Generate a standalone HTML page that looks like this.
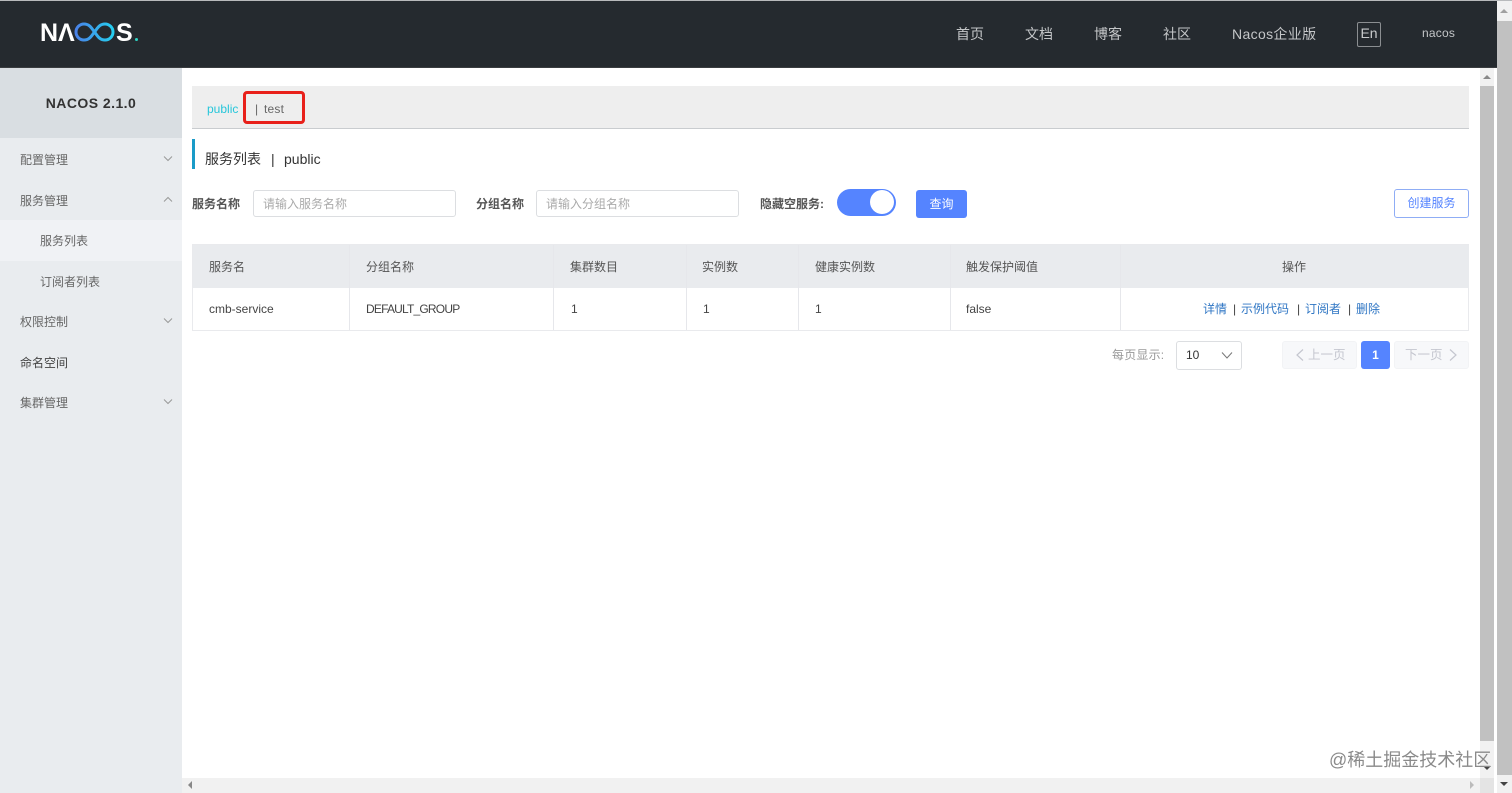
<!DOCTYPE html>
<html lang="zh">
<head>
<meta charset="utf-8">
<title>Nacos</title>
<style>
html,body{margin:0;padding:0;width:1512px;height:793px;overflow:hidden;background:#fff;}
body{font-family:"Liberation Sans","Noto Sans CJK SC",sans-serif;position:relative;color:#333;}
.a{position:absolute;white-space:nowrap;}
.nav{font-size:14px;line-height:20px;color:#c4c6c8;top:24px;}
.m{font-size:12px;line-height:16px;color:#666;left:20px;}
.th{font-size:12px;line-height:16px;color:#555;top:259px;}
.td{font-size:12px;line-height:16px;color:#444;top:301px;}
.b{font-size:12px;line-height:16px;color:#555;font-weight:700;top:196px;}
.inp{top:190px;height:25px;width:201px;border:1px solid #dcdee1;border-radius:3px;background:#fff;font-size:12px;line-height:26px;color:#aaa;text-indent:9px;}
.vl{width:1px;background:#e6e7eb;top:245px;height:85px;}
.lk{color:#2f76c4;font-size:12px;line-height:16px;top:301px;}
</style>
</head>
<body>
<!-- top bar -->
<div class="a" style="left:0;top:0;width:1512px;height:1px;background:#b8babc"></div>
<div class="a" style="left:0;top:1px;width:1497px;height:66px;background:#252a2f"></div>
<div class="a" style="left:0;top:67px;width:1497px;height:1px;background:#3a3d40"></div>
<!-- logo -->
<div class="a" style="left:40px;top:20px;font-size:25px;line-height:26px;font-weight:700;color:#fff">N</div>
<div class="a" style="left:58px;top:20px;font-size:25px;line-height:26px;font-weight:700;color:#fff">&#923;</div>
<svg class="a" style="left:72px;top:21px" width="48" height="22" viewBox="0 0 48 22">
<defs><linearGradient id="g" gradientUnits="userSpaceOnUse" x1="3" x2="42" y1="11" y2="11"><stop offset="0" stop-color="#4a80e8"/><stop offset="1" stop-color="#25d0f0"/></linearGradient></defs>
<path d="M12 3C18 3 20 8 22.500 11 25 14 27 19 33 19A8 8 0 0 0 33 3C27 3 25 8 22.500 11 20 14 18 19 12 19A8 8 0 0 1 12 3Z" fill="none" stroke="url(#g)" stroke-width="3"/>
</svg>
<div class="a" style="left:116px;top:20px;font-size:25px;line-height:26px;font-weight:700;color:#fff">S</div>
<div class="a" style="left:135px;top:38px;width:3px;height:3px;border-radius:2px;background:#2fd4c4"></div>
<!-- nav -->
<div class="a nav" style="left:956px">首页</div>
<div class="a nav" style="left:1025px">文档</div>
<div class="a nav" style="left:1094px">博客</div>
<div class="a nav" style="left:1163px">社区</div>
<div class="a nav" style="left:1232px;letter-spacing:.35px">Nacos企业版</div>
<div class="a" style="left:1357px;top:22px;width:22px;height:23px;border:1px solid #8b8e91;border-radius:2px;font-size:14px;line-height:21px;color:#c8cacc;text-align:center">En</div>
<div class="a" style="left:1422px;top:25px;font-size:12px;line-height:16px;color:#c4c6c8;letter-spacing:.2px">nacos</div>
<!-- sidebar -->
<div class="a" style="left:0;top:68px;width:182px;height:725px;background:#e9ecef"></div>
<div class="a" style="left:0;top:68px;width:182px;height:70px;background:#d9dee2;font-size:14px;font-weight:700;line-height:70px;text-align:center;color:#333;letter-spacing:.45px">NACOS 2.1.0</div>
<div class="a" style="left:0;top:220px;width:182px;height:41px;background:#f0f2f5"></div>
<div class="a m" style="top:152px">配置管理</div>
<div class="a m" style="top:193px">服务管理</div>
<div class="a m" style="top:233px;left:40px">服务列表</div>
<div class="a m" style="top:274px;left:40px">订阅者列表</div>
<div class="a m" style="top:314px">权限控制</div>
<div class="a m" style="top:355px;color:#444">命名空间</div>
<div class="a m" style="top:395px">集群管理</div>
<svg class="a" style="left:163px;top:155px" width="10" height="8"><path d="M1 1.500L5 5.500 9 1.500" fill="none" stroke="#999" stroke-width="1"/></svg>
<svg class="a" style="left:163px;top:196px" width="10" height="8"><path d="M1 5.500L5 1.500 9 5.500" fill="none" stroke="#999" stroke-width="1"/></svg>
<svg class="a" style="left:163px;top:317px" width="10" height="8"><path d="M1 1.500L5 5.500 9 1.500" fill="none" stroke="#999" stroke-width="1"/></svg>
<svg class="a" style="left:163px;top:398px" width="10" height="8"><path d="M1 1.500L5 5.500 9 1.500" fill="none" stroke="#999" stroke-width="1"/></svg>
<!-- namespace bar -->
<div class="a" style="left:192px;top:86px;width:1277px;height:42px;background:#eeeeee;border-bottom:1px solid #c9cccf"></div>
<div class="a" style="left:207px;top:101px;font-size:12px;line-height:16px;color:#26c6da">public</div>
<div class="a" style="left:255px;top:101px;font-size:12px;line-height:16px;color:#666">|</div>
<div class="a" style="left:264px;top:101px;font-size:12px;line-height:16px;color:#666;letter-spacing:.2px">test</div>
<div class="a" style="left:243px;top:91px;width:56px;height:27px;border:3px solid #e8201a;border-radius:4px"></div>
<!-- title -->
<div class="a" style="left:192px;top:139px;width:3px;height:30px;background:#1a9bc8"></div>
<div class="a" style="left:205px;top:150px;font-size:14px;line-height:18px;color:#333">服务列表</div>
<div class="a" style="left:271px;top:150px;font-size:14px;line-height:18px;color:#333">|</div>
<div class="a" style="left:284px;top:150px;font-size:14px;line-height:18px;color:#333">public</div>
<!-- filter -->
<div class="a b" style="left:192px">服务名称</div>
<div class="a inp" style="left:253px">请输入服务名称</div>
<div class="a b" style="left:476px">分组名称</div>
<div class="a inp" style="left:536px">请输入分组名称</div>
<div class="a b" style="left:760px">隐藏空服务:</div>
<div class="a" style="left:837px;top:189px;width:59px;height:27px;border-radius:14px;background:#5584ff"></div>
<div class="a" style="left:870px;top:190px;width:24px;height:24px;border-radius:12px;background:#fff"></div>
<div class="a" style="left:916px;top:190px;width:51px;height:28px;border-radius:3px;background:#5584ff;color:#fff;font-size:12px;line-height:28px;text-align:center">查询</div>
<div class="a" style="left:1394px;top:189px;width:73px;height:27px;border:1px solid #8fadf5;border-radius:3px;background:#fff;color:#5584ff;font-size:12px;line-height:27px;text-align:center">创建服务</div>
<!-- table -->
<div class="a" style="left:192px;top:244px;width:1275px;height:85px;border:1px solid #e9eaed"></div>
<div class="a" style="left:193px;top:245px;width:1276px;height:43px;background:#e9ebee"></div>
<div class="a vl" style="left:349px"></div>
<div class="a vl" style="left:553px"></div>
<div class="a vl" style="left:686px"></div>
<div class="a vl" style="left:798px"></div>
<div class="a vl" style="left:950px"></div>
<div class="a vl" style="left:1120px"></div>
<div class="a th" style="left:209px">服务名</div>
<div class="a th" style="left:366px">分组名称</div>
<div class="a th" style="left:570px">集群数目</div>
<div class="a th" style="left:702px">实例数</div>
<div class="a th" style="left:815px">健康实例数</div>
<div class="a th" style="left:966px">触发保护阈值</div>
<div class="a th" style="left:1282px">操作</div>
<div class="a td" style="left:209px">cmb-service</div>
<div class="a td" style="left:366px;letter-spacing:-.8px">DEFAULT_GROUP</div>
<div class="a td" style="left:571px">1</div>
<div class="a td" style="left:703px">1</div>
<div class="a td" style="left:815px">1</div>
<div class="a td" style="left:966px">false</div>
<div class="a lk" style="left:1203px">详情</div>
<div class="a td" style="left:1233px">|</div>
<div class="a lk" style="left:1241px">示例代码</div>
<div class="a td" style="left:1297px">|</div>
<div class="a lk" style="left:1305px">订阅者</div>
<div class="a td" style="left:1348px">|</div>
<div class="a lk" style="left:1356px">删除</div>
<!-- pagination -->
<div class="a" style="left:1112px;top:347px;font-size:12px;line-height:16px;color:#999;letter-spacing:.2px">每页显示:</div>
<div class="a" style="left:1176px;top:341px;width:64px;height:27px;border:1px solid #dcdee1;border-radius:3px;background:#fff;font-size:12px;line-height:27px;color:#333;text-indent:9px">10</div>
<svg class="a" style="left:1221px;top:351px" width="12" height="9"><path d="M1 1.500L6 7 11 1.500" fill="none" stroke="#777" stroke-width="1"/></svg>
<div class="a" style="left:1282px;top:341px;width:73px;height:26px;border:1px solid #f2f3f5;border-radius:3px;background:#f7f8fa"></div>
<div class="a" style="left:1308px;top:347px;font-size:12.500px;line-height:16px;color:#c4c6cf">上一页</div>
<svg class="a" style="left:1295px;top:348px" width="10" height="14"><path d="M8 1.500L2 7 8 12.500" fill="none" stroke="#c4c6cf" stroke-width="1.200"/></svg>
<div class="a" style="left:1361px;top:341px;width:29px;height:28px;border-radius:3px;background:#5584ff;color:#fff;font-size:12px;font-weight:700;line-height:28px;text-align:center">1</div>
<div class="a" style="left:1394px;top:341px;width:73px;height:26px;border:1px solid #f2f3f5;border-radius:3px;background:#f7f8fa"></div>
<div class="a" style="left:1405px;top:347px;font-size:12.500px;line-height:16px;color:#c4c6cf">下一页</div>
<svg class="a" style="left:1448px;top:348px" width="10" height="14"><path d="M2 1.500L8 7 2 12.500" fill="none" stroke="#c4c6cf" stroke-width="1.200"/></svg>
<!-- scrollbars -->
<div class="a" style="left:1480px;top:68px;width:17px;height:710px;background:#f1f1f1"></div>
<div class="a" style="left:1480px;top:86px;width:14px;height:655px;background:#c1c1c1"></div>
<div class="a" style="left:1494px;top:68px;width:3px;height:725px;background:#fff"></div>
<div class="a" style="left:1497px;top:1px;width:15px;height:792px;background:#f1f1f1"></div>
<div class="a" style="left:1497px;top:21px;width:15px;height:754px;background:#c1c1c1"></div>
<svg class="a" style="left:1483px;top:74px;" width="10" height="6"><path d="M0 5H8L4 1Z" fill="#888"/></svg>
<svg class="a" style="left:1500px;top:8px" width="10" height="6"><path d="M0 5H8L4 1Z" fill="#a0a0a0"/></svg>
<svg class="a" style="left:1483px;top:765px" width="10" height="6"><path d="M0 1H8L4 5Z" fill="#444"/></svg>
<svg class="a" style="left:1500px;top:781px" width="10" height="6"><path d="M0 1H8L4 5Z" fill="#444"/></svg>
<div class="a" style="left:182px;top:778px;width:1312px;height:15px;background:#f1f1f1"></div>
<div class="a" style="left:1480px;top:778px;width:14px;height:15px;background:#e4e4e4"></div>
<svg class="a" style="left:187px;top:781px" width="6" height="10"><path d="M5 0V8L1 4Z" fill="#888"/></svg>
<svg class="a" style="left:1469px;top:781px" width="6" height="10"><path d="M1 0V8L5 4Z" fill="#bbb"/></svg>
<!-- watermark -->
<div class="a" style="left:1329px;top:750px;font-size:18px;line-height:20px;color:#8a8a8a">@稀土掘金技术社区</div>
</body>
</html>
